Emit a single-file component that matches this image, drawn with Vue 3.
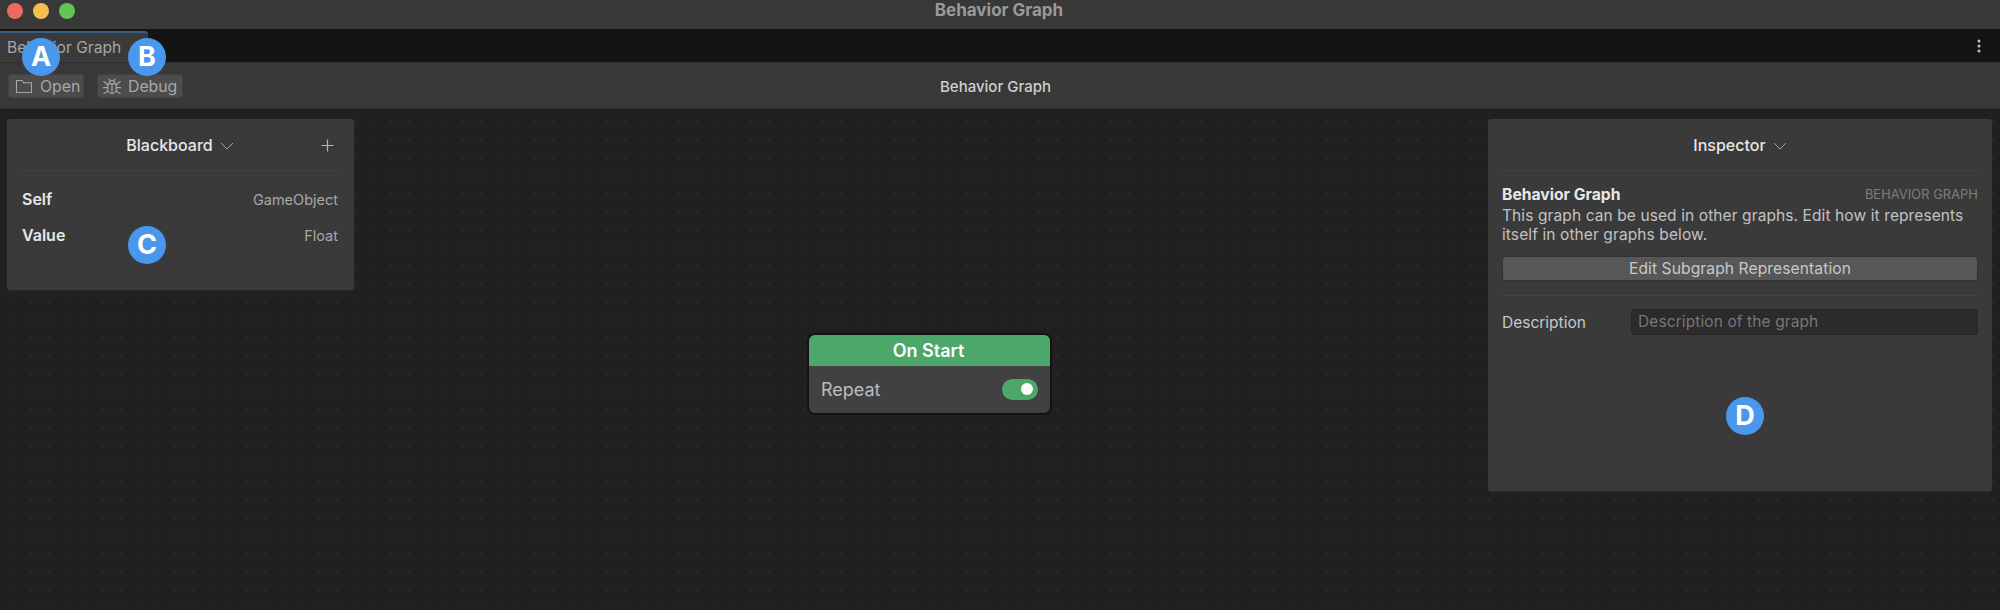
<script setup>
const vars = [
  { name: 'Self', type: 'GameObject' },
  { name: 'Value', type: 'Float' },
]
const badges = [
  { id: 'A', cls: 'ba' },
  { id: 'B', cls: 'bb' },
  { id: 'C', cls: 'bc' },
  { id: 'D', cls: 'bd' },
]
</script>

<template>
  <div class="app">
    <header class="titlebar">
      <div class="lights">
        <span class="light red"></span>
        <span class="light yellow"></span>
        <span class="light green"></span>
      </div>
      <span class="wintitle">Behavior Graph</span>
    </header>

    <div class="tabbar">
      <div class="tab">Behavior Graph</div>
      <svg class="kebab" width="4" height="14" viewBox="0 0 4 14"><circle cx="2" cy="2" r="1.5" /><circle cx="2" cy="7" r="1.5" /><circle cx="2" cy="12" r="1.5" /></svg>
    </div>

    <div class="toolbar">
      <button class="tool open">
        <svg width="18" height="15" viewBox="0 0 18 15" fill="none" stroke="#a8a8a8" stroke-width="1.1"><path d="M1.5 13.5V1.5H7l1.6 2.2h7.9v9.8z" /></svg>
        <span>Open</span>
      </button>
      <button class="tool debug">
        <svg width="20" height="19" viewBox="0 0 19 18" fill="none" stroke="#a8a8a8" stroke-width="1.1"><path d="M5.5 6.5h8v5a4 4 0 0 1-8 0z" /><path d="M6.5 6.5a3 3 0 0 1 6 0M9.5 6.5V15.5M6.5 1.5l1.3 2.2M12.5 1.5l-1.3 2.2M1.5 4l4 3.5M17.5 4l-4 3.5M1 10h4.500M18 10h-4.500M1.500 16l4.300-3M17.500 16l-4.300-3" /></svg>
        <span>Debug</span>
      </button>
      <span class="toolbar-title">Behavior Graph</span>
    </div>

    <main class="canvas">
      <section class="panel blackboard">
        <div class="panel-head">
          <span class="panel-title">Blackboard</span>
          <svg class="chev" width="14" height="8" viewBox="0 0 14 8" fill="none" stroke="#a0a0a0" stroke-width="1"><path d="M1 1l6 6 6-6" /></svg>
          <svg class="plus" width="13" height="13" viewBox="0 0 13 13" fill="none" stroke="#b4b4b4" stroke-width="1.200"><path d="M6.500 0.500v12M0.500 6.500h12" /></svg>
        </div>
        <div class="vars">
          <div v-for="v in vars" :key="v.name" class="var">
            <span class="var-name">{{ v.name }}</span>
            <span class="var-type">{{ v.type }}</span>
          </div>
        </div>
      </section>

      <section class="panel inspector">
        <div class="panel-head">
          <span class="panel-title">Inspector</span>
          <svg class="chev" width="14" height="8" viewBox="0 0 14 8" fill="none" stroke="#a0a0a0" stroke-width="1"><path d="M1 1l6 6 6-6" /></svg>
        </div>
        <div class="ins-body">
          <div class="ins-top">
            <strong>Behavior Graph</strong>
            <span class="kind">BEHAVIOR GRAPH</span>
          </div>
          <p class="ins-text">This graph can be used in other graphs. Edit how it represents itself in other graphs below.</p>
          <button class="edit">Edit Subgraph Representation</button>
          <div class="sep"></div>
          <div class="desc">
            <span class="desc-label">Description</span>
            <div class="desc-input">Description of the graph</div>
          </div>
        </div>
      </section>

      <div class="node">
        <div class="node-head">On Start</div>
        <div class="node-body">
          <span>Repeat</span>
          <span class="toggle"><i></i></span>
        </div>
      </div>
    </main>

    <span v-for="b in badges" :key="b.id" class="badge" :class="b.cls">{{ b.id }}</span>
  </div>
</template>

<style>
html, body { margin: 0; background: #202020; }
</style>

<style scoped>
.app {
  position: relative;
  width: 2000px;
  height: 610px;
  overflow: hidden;
  display: flex;
  flex-direction: column;
  font-family: Inter, "Liberation Sans", sans-serif;
  background: #202020;
}
.titlebar {
  position: relative;
  flex: 0 0 29px;
  background: #383838;
  display: flex;
  justify-content: center;
}
.lights {
  position: absolute;
  left: 6.5px;
  top: 3px;
  display: flex;
  gap: 10px;
}
.light { width: 16px; height: 16px; border-radius: 50%; }
.red { background: #ee6a5f; }
.yellow { background: #f5bd4f; }
.green { background: #61c454; }
.wintitle {
  font-size: 17px;
  font-weight: 700;
  color: #9a9a9a;
  line-height: 20px;
  margin-left: -2px;
}
.tabbar {
  flex: 0 0 33px;
  background: #141414;
  display: flex;
  justify-content: space-between;
  align-items: center;
  padding-right: 19px;
  box-sizing: border-box;
}
.tab {
  align-self: stretch;
  width: 148px;
  margin-top: 2px;
  box-sizing: border-box;
  background: #3a3a3a;
  border-top: 2px solid #3a5f85;
  border-top-right-radius: 4px;
  padding: 5px 0 0 7px;
  font-size: 15.6px;
  line-height: 19px;
  color: #a6a6a6;
}
.kebab { fill: #c4c4c4; }
.toolbar {
  position: relative;
  flex: 0 0 47px;
  box-sizing: border-box;
  background: #383838;
  border-top: 1px solid #2e2e2e;
  border-bottom: 1px solid #2c2c2c;
  display: flex;
  align-items: flex-start;
  gap: 13px;
  padding: 11px 0 0 8px;
}
.tool {
  height: 24px;
  box-sizing: border-box;
  display: flex;
  align-items: center;
  gap: 7px;
  padding: 0;
  background: #4c4c4c;
  border: 1px solid #424242;
  border-radius: 3px;
  font: 15.8px Inter, sans-serif;
  color: #a8a8a8;
}
.open { width: 76px; padding-left: 6px; }
.debug { width: 86px; padding-left: 4px; gap: 6px; }
.toolbar-title {
  position: absolute;
  left: 940px;
  top: 14px;
  font-size: 15px;
  font-weight: 500;
  line-height: 20px;
  color: #cfcfcf;
}
.canvas {
  position: relative;
  flex: 1;
  display: flex;
  justify-content: space-between;
  align-items: flex-start;
  padding: 10px 8px 0 7px;
  background-color: #202020;
  background-image: radial-gradient(circle at 1.5px 1.5px, #3a3a3a 0.7px, transparent 1.1px);
  background-size: 18px 18px;
  background-position: 11.5px 11.5px;
}
.panel {
  background: #3a3a3a;
  border-radius: 3px;
  box-sizing: border-box;
  box-shadow: 0 1px 0 #2a2a2a;
}
.blackboard { width: 347px; height: 171px; padding: 0 16px 0 15px; }
.inspector { width: 504px; height: 372px; padding: 0 14px 0 14px; }
.panel-head {
  position: relative;
  height: 52px;
  border-bottom: 1px solid #414141;
  display: flex;
  align-items: center;
  justify-content: center;
  gap: 7px;
  box-sizing: border-box;
}
.panel-title { font-size: 16px; font-weight: 500; color: #e6e6e6; }
.chev { margin-top: 2px; }
.plus { position: absolute; right: 4px; top: 20px; }
.vars { padding-top: 19px; display: flex; flex-direction: column; gap: 18px; }
.var {
  display: flex;
  justify-content: space-between;
  align-items: center;
  height: 18px;
}
.var-name { font-size: 16px; font-weight: 600; color: #e8e8e8; }
.var-type { font-size: 14.5px; color: #a8a8a8; }
.ins-body { padding: 13px 0 0 0; }
.ins-top {
  display: flex;
  justify-content: space-between;
  align-items: center;
  height: 20px;
}
.ins-top strong { font-size: 15.7px; font-weight: 700; color: #e8e8e8; }
.kind { font-size: 12.8px; color: #7e7e7e; letter-spacing: 0.1px; }
.ins-text {
  margin: 2px 0 0;
  font-size: 15.5px;
  line-height: 19px;
  color: #c2c2c2;
  letter-spacing: 0.1px;
}
.edit {
  display: block;
  width: 100%;
  height: 25px;
  margin-top: 12px;
  background: #575757;
  border: 1px solid #333;
  border-radius: 3px;
  font: 15.6px Inter, sans-serif;
  color: #c8c8c8;
  letter-spacing: 0.1px;
}
.sep { height: 1px; margin: 14px 0 13px; background: #444; }
.desc { display: flex; align-items: center; }
.desc-label { width: 129px; font-size: 15.5px; color: #c8c8c8; }
.desc-input {
  flex: 1;
  height: 26px;
  box-sizing: border-box;
  background: #2b2b2b;
  border: 1px solid #262626;
  border-radius: 3px;
  padding-left: 6px;
  font-size: 15.5px;
  line-height: 24px;
  color: #777;
  letter-spacing: 0.1px;
}
.node {
  position: absolute;
  left: 808px;
  top: 225px;
  width: 243px;
  height: 80px;
  box-sizing: border-box;
  border: 1px solid #101010;
  border-radius: 7px;
  overflow: hidden;
  background: #414141;
  box-shadow: 0 0 0 1px #141414;
}
.node-head {
  height: 31px;
  background: #4ca76a;
  color: #fff;
  font-size: 18px;
  font-weight: 600;
  text-align: center;
  line-height: 31px;
  padding-right: 2px;
}
.node-body {
  display: flex;
  justify-content: space-between;
  align-items: center;
  height: 46px;
  padding: 0 12px;
  font-size: 18px;
  color: #bcbcbc;
}
.toggle {
  width: 36px;
  height: 21px;
  border-radius: 11px;
  background: #4ca76a;
  display: flex;
  align-items: center;
  justify-content: flex-end;
  padding-right: 5px;
  box-sizing: border-box;
}
.toggle i { width: 12px; height: 12px; border-radius: 50%; background: #fff; }
.badge {
  position: absolute;
  width: 38px;
  height: 38px;
  margin: -19px 0 0 -19px;
  border-radius: 50%;
  background: #4a98ed;
  color: #fff;
  font-size: 27px;
  font-weight: 700;
  line-height: 38px;
  text-align: center;
}
.ba { left: 41px; top: 57px; }
.bb { left: 147px; top: 57px; }
.bc { left: 147px; top: 245px; }
.bd { left: 1745px; top: 416px; }
</style>
